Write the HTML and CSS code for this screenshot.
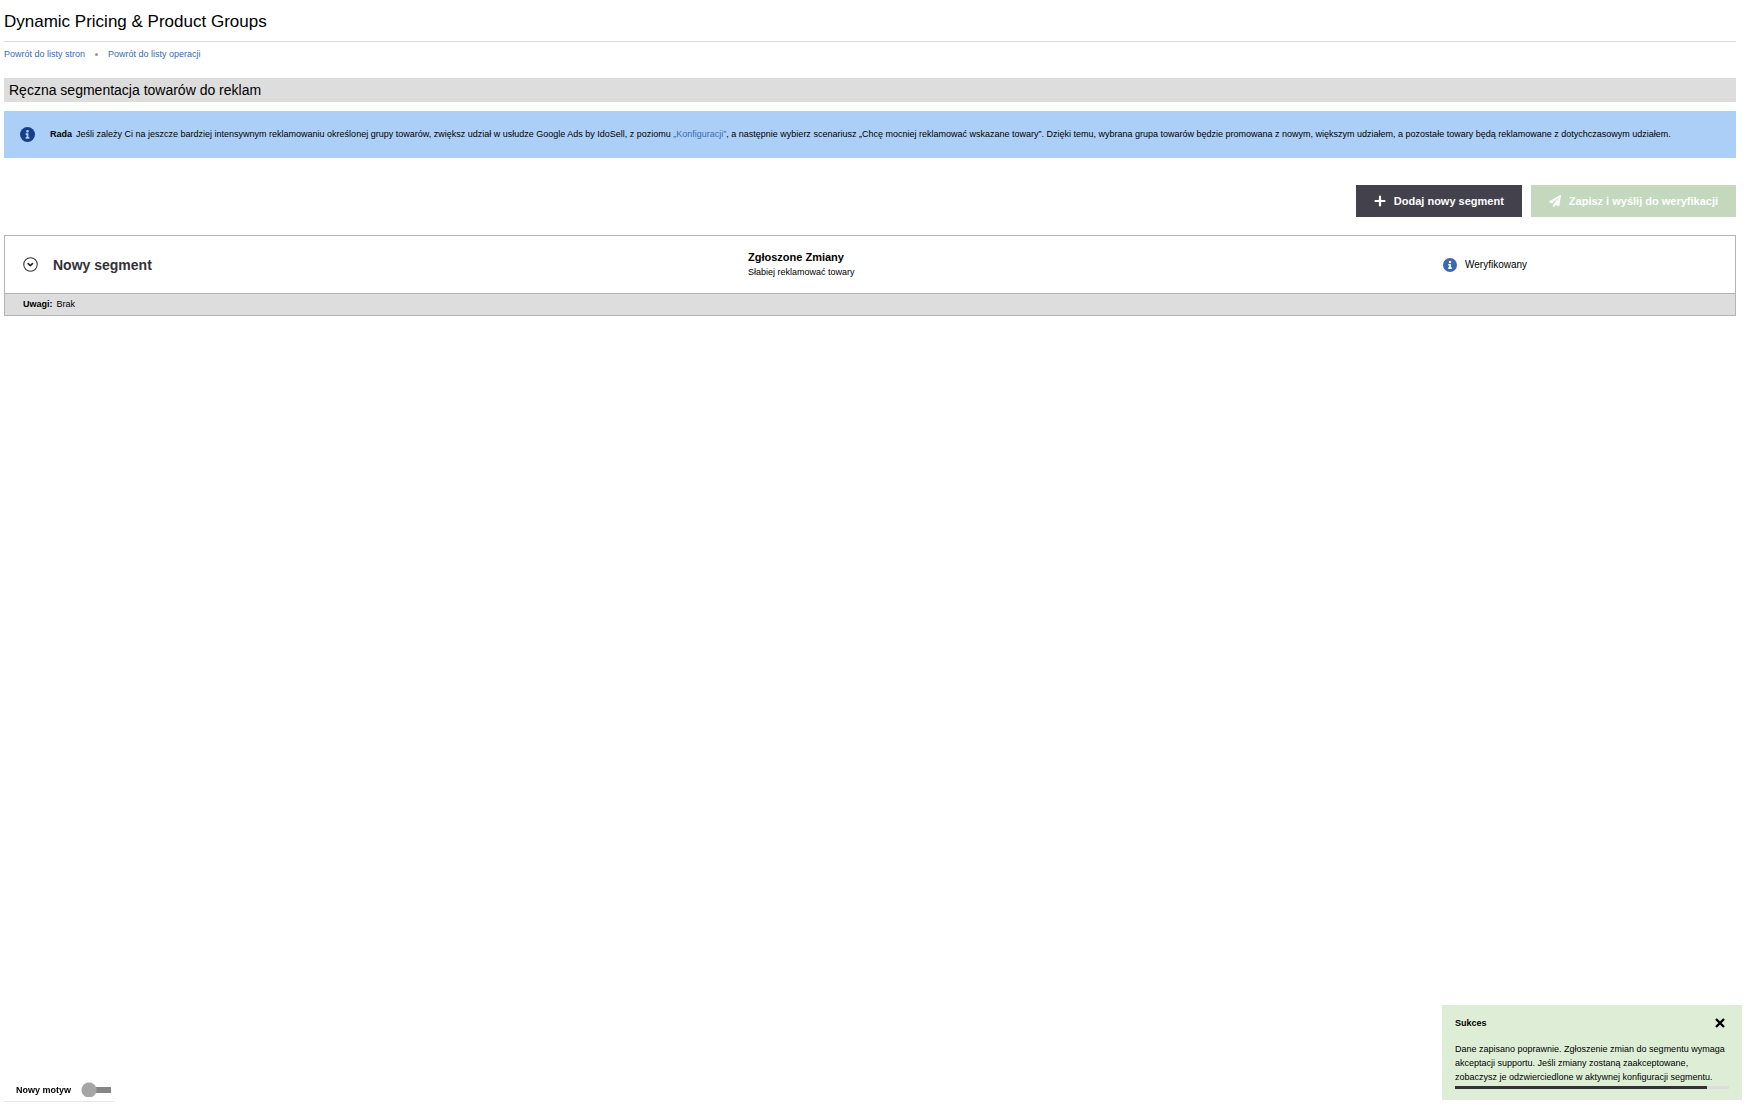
FILE: index.html
```html
<!DOCTYPE html>
<html lang="pl">
<head>
  <meta charset="UTF-8">
  <title>Dynamic Pricing &amp; Product Groups</title>
  <link rel="stylesheet" href="styles.css">
</head>
<body>
<main class="page">
  <h1>Dynamic Pricing &amp; Product Groups</h1>

  <nav class="links">
    <a href="#">Powrót do listy stron</a>
    <span class="dot"></span>
    <a href="#">Powrót do listy operacji</a>
  </nav>

  <h2>Ręczna segmentacja towarów do reklam</h2>

  <div class="tip">
    <svg class="tip-icon" viewBox="0 0 512 512"><circle cx="256" cy="256" r="256" fill="#163f87"/><path fill="#accff7" d="M256 100a46 46 0 1 1 0 92a46 46 0 0 1 0-92zM190 228c0-7 5-12 12-12h74c7 0 12 5 12 12v112h22c7 0 12 5 12 12v34c0 7-5 12-12 12H202c-7 0-12-5-12-12v-34c0-7 5-12 12-12h22v-68h-22c-7 0-12-5-12-12z"/></svg>
    <p><strong>Rada</strong>Jeśli zależy Ci na jeszcze bardziej intensywnym reklamowaniu określonej grupy towarów, zwiększ udział w usłudze Google Ads by IdoSell, z poziomu <a href="#">„Konfiguracji”</a>, a następnie wybierz scenariusz „Chcę mocniej reklamować wskazane towary”. Dzięki temu, wybrana grupa towarów będzie promowana z nowym, większym udziałem, a pozostałe towary będą reklamowane z dotychczasowym udziałem.</p>
  </div>

  <div class="actions">
    <button type="button" class="btn btn-dark">
      <svg viewBox="0 0 12 12"><path fill="none" stroke="#fff" stroke-width="2.200" stroke-linecap="round" d="M6 1.500v9M1.500 6h9"/></svg>
      Dodaj nowy segment
    </button>
    <button type="button" class="btn btn-green" disabled>
      <svg viewBox="0 0 512 512"><path fill="#fff" d="M476 3.200L12.500 270.600c-18.100 10.400-15.800 35.600 2.200 43.200L121 358.400l287.300-253.200c5.500-4.900 13.300 2.600 8.600 8.300L176 407v80.500c0 23.600 28.500 32.900 42.500 15.800L282 426l124.600 52.200c14.200 6 30.400-2.900 33-18.200l72-432C515 7.800 493.300-6.800 476 3.200z"/></svg>
      Zapisz i wyślij do weryfikacji
    </button>
  </div>

  <section class="segment">
    <div class="segment-row">
      <button type="button" class="toggle" aria-label="Rozwiń">
        <svg viewBox="0 0 16 16"><circle cx="8" cy="8" r="7.200" fill="#fff" stroke="#333238" stroke-width="1.100"/><path fill="none" stroke="#222127" stroke-width="1.700" stroke-linecap="round" stroke-linejoin="round" d="M5.500 7l2.300 2.200L10.100 7"/></svg>
      </button>
      <h3>Nowy segment</h3>
      <div class="changes">
        <strong>Zgłoszone Zmiany</strong>
        <span>Słabiej reklamować towary</span>
      </div>
      <div class="status">
        <svg viewBox="0 0 512 512"><circle cx="256" cy="256" r="256" fill="#3a6bb0"/><path fill="#fff" d="M256 100a46 46 0 1 1 0 92a46 46 0 0 1 0-92zM190 228c0-7 5-12 12-12h74c7 0 12 5 12 12v112h22c7 0 12 5 12 12v34c0 7-5 12-12 12H202c-7 0-12-5-12-12v-34c0-7 5-12 12-12h22v-68h-22c-7 0-12-5-12-12z"/></svg>
        Weryfikowany
      </div>
    </div>
    <p class="notes"><strong>Uwagi:</strong>Brak</p>
  </section>
</main>

<label class="theme" for="theme">
  Nowy motyw
  <input type="checkbox" id="theme" class="switch">
</label>

<div class="toast" role="status">
  <div class="toast-head">
    <strong>Sukces</strong>
    <button type="button" class="close" aria-label="Zamknij">
      <svg viewBox="0 0 10 10"><path fill="none" stroke="#000" stroke-width="2.400" d="M1 1l8 8M9 1L1 9"/></svg>
    </button>
  </div>
  <p>Dane zapisano poprawnie. Zgłoszenie zmian do segmentu wymaga akceptacji supportu. Jeśli zmiany zostaną zaakceptowane, zobaczysz je odzwierciedlone w aktywnej konfiguracji segmentu.</p>
  <div class="bar"><div class="bar-fill"></div></div>
</div>
</body>
</html>
```
FILE: styles.css
```css
* {
  box-sizing: border-box;
}

body {
  margin: 0;
  background-color: #fff;
  color: #000;
  font-family: "Liberation Sans", Arial, sans-serif;
  font-size: 9px;
}

h1, h2, h3, p {
  margin: 0;
}

a {
  color: #3a6bb0;
  text-decoration: none;
}

button {
  font-family: inherit;
  border: none;
  cursor: pointer;
}

.page {
  padding: 0 13px 0 4px;
}

h1 {
  padding: 12px 0 9px;
  border-bottom: 1px solid #ddd;
  font-size: 17px;
  line-height: 20px;
  font-weight: normal;
}

.links {
  display: flex;
  align-items: center;
  gap: 10px;
  margin-top: 6px;
  line-height: 12px;
}

.dot {
  width: 3px;
  height: 3px;
  border-radius: 50%;
  background-color: #999;
}

h2 {
  margin-top: 18px;
  padding: 0 5px;
  background-color: #ddd;
  font-size: 14px;
  line-height: 24px;
  font-weight: normal;
}

.tip {
  display: flex;
  align-items: center;
  gap: 15px;
  margin-top: 9px;
  padding: 16px;
  background-color: #accff7;
  line-height: 15px;
}

.tip-icon {
  flex: none;
  width: 15px;
  height: 15px;
}

.tip strong,
.notes strong {
  margin-right: 4px;
}

.actions {
  display: flex;
  justify-content: flex-end;
  gap: 9px;
  margin-top: 27px;
}

.btn {
  display: flex;
  align-items: center;
  gap: 8px;
  height: 32px;
  padding: 0 18px 1px;
  color: #fff;
  font-size: 11px;
  font-weight: bold;
}

.btn svg {
  width: 12px;
  height: 12px;
}

.btn-dark {
  background-color: #43414b;
}

.btn-green {
  background-color: #c3d8bc;
}

.segment {
  margin-top: 18px;
  border: 1px solid #b4b4b4;
}

.segment-row {
  display: grid;
  grid-template-columns: 30px 1fr 1fr 292px;
  align-items: center;
  height: 57px;
  padding-left: 18px;
}

.toggle {
  width: 15px;
  height: 15px;
  padding: 0;
  background: none;
}

.toggle svg {
  display: block;
}

h3 {
  color: #333238;
  font-size: 14px;
}

.changes strong,
.changes span {
  display: block;
  line-height: 15px;
}

.changes strong {
  font-size: 11px;
}

.status {
  display: flex;
  align-items: center;
  gap: 8px;
  font-size: 10px;
}

.status svg {
  width: 14px;
  height: 14px;
}

.notes {
  padding: 0 18px;
  border-top: 1px solid #b4b4b4;
  background-color: #ddd;
  line-height: 21px;
}

.theme {
  position: fixed;
  left: 4px;
  bottom: 5px;
  display: flex;
  align-items: center;
  gap: 10px;
  padding: 4px 4px 4px 12px;
  border-bottom: 1px solid #e8e8e8;
  font-weight: bold;
}

/* knob over a flat track */
.switch {
  appearance: none;
  width: 30px;
  height: 15px;
  margin: 0;
  background: radial-gradient(circle at 8px 8px, #a5a5a5 7px, transparent 8px),
    linear-gradient(#858585, #858585) right center / 22px 6px no-repeat;
}

.toast {
  position: fixed;
  right: 7px;
  bottom: 7px;
  width: 300px;
  padding: 11px 13px 10px;
  border-bottom: 1px solid #e8e8e8;
  background-color: #deeed6;
}

.toast-head {
  display: flex;
  align-items: center;
  justify-content: space-between;
  margin-bottom: 12px;
  padding-right: 4px;
  line-height: 14px;
}

.close {
  padding: 0;
  background: none;
}

.close svg {
  display: block;
  width: 10px;
  height: 10px;
}

.toast p {
  line-height: 14px;
}

.bar {
  height: 3px;
  margin-top: 2px;
  background-color: #ddd;
}

.bar-fill {
  width: 92%;
  height: 100%;
  background-color: #333238;
}
```
